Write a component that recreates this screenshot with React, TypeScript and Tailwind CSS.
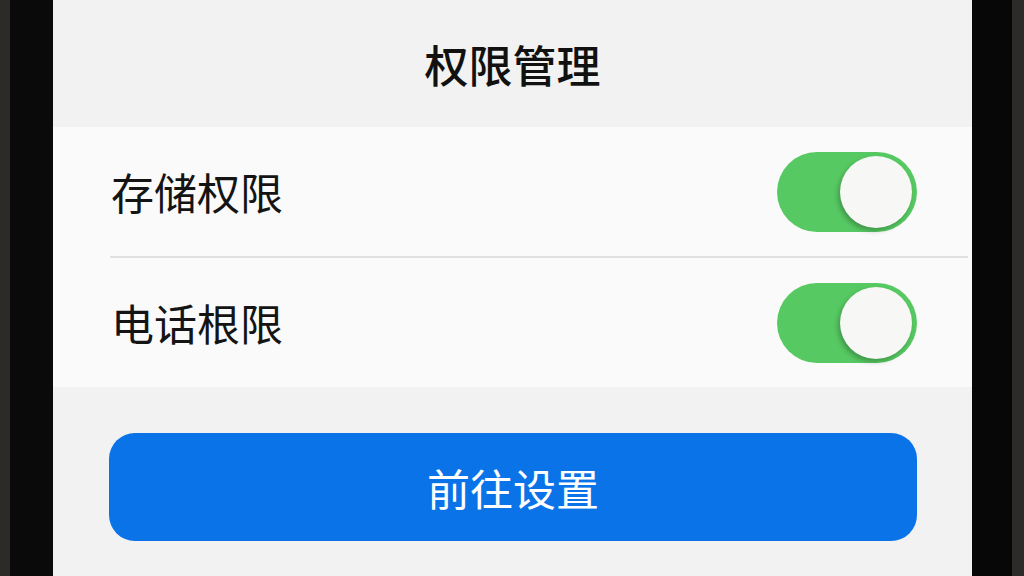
import React from "react";

const font = { fontFamily: '"Noto Sans CJK SC", "Noto Sans", sans-serif' };

function Toggle() {
  return (
    <div className="relative h-[80px] w-[140px] rounded-full bg-[#56c962]">
      <div className="absolute right-[5px] top-[4px] h-[72px] w-[72px] rounded-full bg-[#f7f7f5] shadow-[-2px_3px_5px_rgba(0,0,0,0.25)]" />
    </div>
  );
}

function Row({ label }: { label: string }) {
  return (
    <div className="flex h-[129px] items-center justify-between pl-[58px] pr-[55px]">
      <span className="text-[43px] leading-none text-[#141414]">{label}</span>
      <Toggle />
    </div>
  );
}

export default function App() {
  return (
    <div className="flex h-[576px] w-[1024px] overflow-hidden bg-black" style={font}>
      <div className="flex h-full w-[53px]">
        <div className="h-full w-[10px] bg-[#2c2b28]" />
        <div className="h-full flex-1 bg-[#0a0a0a]" />
      </div>

      <div className="flex h-full w-[919px] flex-col bg-[#f2f2f2]">
        <div className="flex h-[127px] items-center justify-center pt-[1px]">
          <h1 className="text-[44px] font-medium leading-none text-[#111111]">权限管理</h1>
        </div>

        <div className="bg-[#fafafa]">
          <Row label="存储权限" />
          <div className="ml-[57px] mr-[4px] h-[2px] bg-[#e0e0e0]" />
          <Row label="电话根限" />
        </div>

        <div className="pl-[56px] pr-[55px] pt-[46px]">
          <button className="flex h-[108px] w-full items-center justify-center rounded-[26px] bg-[#0b73e8] text-[43px] text-white">
            前往设置
          </button>
        </div>
      </div>

      <div className="flex h-full w-[52px]">
        <div className="h-full flex-1 bg-[#070707]" />
        <div className="h-full w-[12px] bg-[#2c2b29]" />
      </div>
    </div>
  );
}
